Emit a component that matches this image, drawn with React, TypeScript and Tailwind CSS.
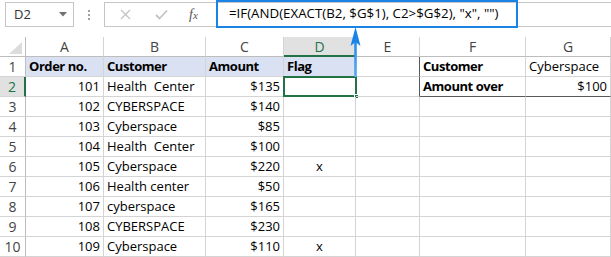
import React from "react";

const W = ["w-[78px]", "w-[102px]", "w-[78px]", "w-[72px]", "w-[64px]", "w-[106px]", "w-[85px]"];
const LETTERS = ["A", "B", "C", "D", "E", "F", "G"];

type C = { t?: string; r?: boolean; b?: boolean; c?: boolean };

const rows: C[][] = [
  [{ t: "Order no.", b: true }, { t: "Customer", b: true }, { t: "Amount", b: true }, { t: "Flag", b: true }, {}, { t: "Customer", b: true }, { t: "Cyberspace" }],
  [{ t: "101", r: true }, { t: "Health  Center" }, { t: "$135", r: true }, {}, {}, { t: "Amount over", b: true }, { t: "$100", r: true }],
  [{ t: "102", r: true }, { t: "CYBERSPACE" }, { t: "$140", r: true }, {}, {}, {}, {}],
  [{ t: "103", r: true }, { t: "Cyberspace" }, { t: "$85", r: true }, {}, {}, {}, {}],
  [{ t: "104", r: true }, { t: "Health  Center" }, { t: "$100", r: true }, {}, {}, {}, {}],
  [{ t: "105", r: true }, { t: "Cyberspace" }, { t: "$220", r: true }, { t: "x", c: true }, {}, {}, {}],
  [{ t: "106", r: true }, { t: "Health center" }, { t: "$50", r: true }, {}, {}, {}, {}],
  [{ t: "107", r: true }, { t: "cyberspace" }, { t: "$165", r: true }, {}, {}, {}, {}],
  [{ t: "108", r: true }, { t: "CYBERSPACE" }, { t: "$230", r: true }, {}, {}, {}, {}],
  [{ t: "109", r: true }, { t: "Cyberspace" }, { t: "$110", r: true }, { t: "x", c: true }, {}, {}, {}],
];

export default function App() {
  return (
    <div className="w-[611px] h-[257px] overflow-hidden bg-white relative" style={{ fontFamily: "'Open Sans', 'Noto Sans', sans-serif" }}>
      {/* Top bar */}
      <div className="h-[37px] flex items-start pt-[2px]">
        <div className="ml-[5px] w-[69px] h-[25px] border border-[#c6c6c6] flex items-center justify-between pl-[8px] pr-[6px]">
          <span className="text-[13px] text-[#333]">D2</span>
          <svg width="8" height="5" viewBox="0 0 8 5"><path d="M0 0 L8 0 L4 4.5 Z" fill="#707070" /></svg>
        </div>
        <div className="w-[30px] h-[25px] flex flex-col items-center justify-center gap-[2px]">
          <span className="w-[2px] h-[2px] bg-[#a0a0a0]" />
          <span className="w-[2px] h-[2px] bg-[#a0a0a0]" />
          <span className="w-[2px] h-[2px] bg-[#a0a0a0]" />
        </div>
        <div className="flex-1 h-[25px] border border-[#c6c6c6] border-r-0 flex items-center relative">
          <div className="w-[111px] h-full flex items-center">
            <svg className="ml-[15px]" width="11" height="11" viewBox="0 0 11 11"><path d="M1 1 L10 10 M10 1 L1 10" stroke="#c3c3c3" strokeWidth="1.3" /></svg>
            <svg className="ml-[24px]" width="13" height="11" viewBox="0 0 13 11"><path d="M1 6 L4.5 9.5 L12 1.5" stroke="#c3c3c3" strokeWidth="1.8" fill="none" /></svg>
            <span className="ml-[21px] text-[14px] italic text-[#555]" style={{ fontFamily: "'Liberation Serif', serif" }}>f<span className="text-[11px]">x</span></span>
          </div>
          <div className="absolute left-[111px] top-[-3px] w-[302px] h-[28px] border-2 border-[#1a84e6] flex items-center pl-[11px]">
            <span className="text-[13.3px] text-black whitespace-pre">=IF(AND(EXACT(B2, $G$1), C2&gt;$G$2), "x", "")</span>
          </div>
        </div>
      </div>

      {/* Column header row */}
      <div className="flex h-[20px]">
        <div className="w-[26px] h-full border-r border-b border-[#bdbdbd] relative">
          <svg className="absolute left-[9px] top-[5px]" width="13" height="12" viewBox="0 0 13 12"><path d="M13 0 L13 12 L0 12 Z" fill="#dcdcdc" /></svg>
        </div>
        {LETTERS.map((l, i) => (
          <div
            key={l}
            className={`${W[i]} h-full flex items-center justify-center text-[14px] ${
              i === 3
                ? "bg-[#e1e1e1] text-[#217346] border-b-2 border-b-[#217346] border-r border-r-[#d4d4d4]"
                : "text-[#444] border-r border-r-[#d4d4d4] border-b border-b-[#bdbdbd]"
            }`}
          >
            {l}
          </div>
        ))}
      </div>

      {/* Data rows */}
      {rows.map((row, ri) => (
        <div key={ri} className="flex h-[20px]">
          <div
            className={`w-[26px] h-full flex items-center justify-center text-[14px] border-b border-b-[#d4d4d4] ${
              ri === 1
                ? "bg-[#e1e1e1] text-[#217346] border-r-2 border-r-[#217346]"
                : "text-[#444] border-r border-r-[#bdbdbd]"
            }`}
          >
            {ri + 1}
          </div>
          {row.map((c, ci) => {
            const blue = ri === 0 && ci <= 3;
            const darkRight = ci === 4 && ri <= 1;
            const darkBottom = ri === 1 && (ci === 5 || ci === 6);
            return (
              <div
                key={ci}
                className={`${W[ci]} h-full relative flex items-end px-[3px] text-[13px] leading-[19px] text-black whitespace-pre border-r border-b ${
                  darkRight ? "border-r-[#595959]" : "border-r-[#d4d4d4]"
                } ${darkBottom ? "border-b-[#595959]" : "border-b-[#d4d4d4]"} ${blue ? "bg-[#d9e1f2]" : ""} ${
                  c.r ? "justify-end" : c.c ? "justify-center" : "justify-start"
                } ${c.b ? "font-bold tracking-[-0.45px]" : ""}`}
              >
                {c.t}
                {ri === 1 && ci === 3 && (
                  <div className="absolute left-[-1px] top-[-1px] w-[74px] h-[21px] border-2 border-[#217346]">
                    <div className="absolute right-[-4px] bottom-[-4px] w-[5px] h-[5px] bg-[#217346] border border-white" />
                  </div>
                )}
              </div>
            );
          })}
        </div>
      ))}

      {/* Blue arrow annotation */}
      <svg className="absolute left-[349px] top-[26px]" width="13" height="52" viewBox="0 0 13 52">
        <defs>
          <linearGradient id="ag" x1="0" y1="0" x2="0" y2="1">
            <stop offset="0" stopColor="#1a84e6" />
            <stop offset="1" stopColor="#5aaaf0" />
          </linearGradient>
        </defs>
        <rect x="5.2" y="8" width="2.6" height="43" fill="url(#ag)" />
        <path d="M6.5 1 L11.5 20 L6.5 16 L1.5 20 Z" fill="#1a84e6" />
      </svg>
    </div>
  );
}
